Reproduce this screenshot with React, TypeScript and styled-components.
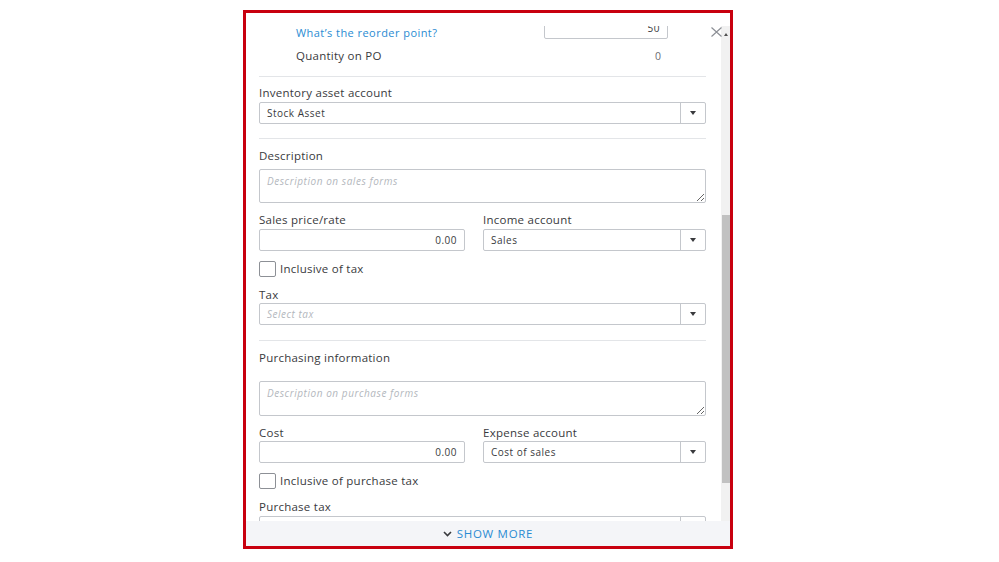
import React, { useLayoutEffect, useRef } from 'react';
import styled, { createGlobalStyle } from 'styled-components';

const GlobalStyle = createGlobalStyle`
  body {
    margin: 0;
    background: #fff;
    font-family: 'Open Sans', 'Liberation Sans', sans-serif;
  }
`;

const Page = styled.div`
  padding: 10px 0 0 243px;
`;

const Panel = styled.div`
  position: relative;
  width: 484px;
  height: 533px;
  border: 3px solid #c8000f;
  background: #fff;
  display: flex;
  flex-direction: column;
`;

const Header = styled.div`
  height: 13px;
  flex-shrink: 0;
`;

const CloseButton = styled.button`
  position: absolute;
  top: 14px;
  right: 8px;
  width: 11px;
  height: 10px;
  padding: 0;
  border: none;
  background: transparent;
  display: flex;
  cursor: pointer;
`;

const Body = styled.div`
  flex: 1;
  min-height: 0;
  display: flex;
`;

const ScrollArea = styled.div`
  flex: 1;
  overflow: hidden;
  padding: 0 15px 0 13px;
`;

const Scrollbar = styled.div`
  width: 9px;
  background: #f1f1f1;
  display: flex;
  flex-direction: column;
  align-items: center;
`;

const ArrowUp = styled.div`
  height: 16px;
  display: flex;
  align-items: center;
  justify-content: center;
  &::after {
    content: '';
    border-left: 2.5px solid transparent;
    border-right: 2.5px solid transparent;
    border-bottom: 3px solid #505050;
  }
`;

const Thumb = styled.div<{ $offset: number; $size: number }>`
  width: 8px;
  margin-top: ${p => p.$offset}px;
  height: ${p => p.$size}px;
  background: #c1c1c1;
`;

const Footer = styled.div`
  height: 25px;
  flex-shrink: 0;
  background: #f4f5f8;
  display: flex;
  align-items: center;
  justify-content: center;
  gap: 5px;
  color: #2a8bd2;
  font-size: 11.5px;
  font-weight: 500;
  letter-spacing: 0.7px;
`;

const StockRow = styled.div<{ $mt?: number }>`
  display: flex;
  align-items: flex-end;
  justify-content: space-between;
  padding: 0 38px 0 37px;
  margin-top: ${p => p.$mt ?? 0}px;
`;

const StockInfo = styled.div`
  display: flex;
  flex-direction: column;
  gap: 6px;
`;

const Link = styled.a`
  color: #2a8bd2;
  font-size: 11px;
  line-height: 12px;
  letter-spacing: 0.45px;
  text-decoration: none;
`;

const RowText = styled.span`
  color: #393a3d;
  font-size: 11.5px;
  font-weight: 500;
  line-height: 20px;
  letter-spacing: 0.25px;
`;

const RowValue = styled.span`
  width: 124px;
  padding-right: 7px;
  box-sizing: border-box;
  text-align: right;
  color: #6b6c72;
  font-size: 10.5px;
  line-height: 20px;
`;

const Divider = styled.hr<{ $mt: number }>`
  margin: ${p => p.$mt}px 0 0;
  border: none;
  border-top: 1px solid #e3e5e8;
`;

const Label = styled.div<{ $mt?: number }>`
  margin-top: ${p => p.$mt ?? 0}px;
  color: #393a3d;
  font-size: 11.5px;
  font-weight: 500;
  line-height: 14px;
  letter-spacing: 0.25px;
  white-space: nowrap;
`;

const TextInput = styled.input<{ $mt?: number; $width?: number }>`
  display: block;
  box-sizing: border-box;
  width: ${p => (p.$width ? `${p.$width}px` : '100%')};
  height: 22px;
  margin-top: ${p => p.$mt ?? 0}px;
  padding: 0 7px;
  border: 1px solid #c4c7cc;
  border-radius: 2px;
  font-family: inherit;
  font-size: 10px;
  letter-spacing: 0.5px;
  color: #393a3d;
  text-align: right;
  outline: none;
`;

const TextArea = styled.textarea<{ $mt: number; $height: number }>`
  display: block;
  box-sizing: border-box;
  width: 100%;
  height: ${p => p.$height}px;
  margin-top: ${p => p.$mt}px;
  padding: 4px 7px;
  border: 1px solid #c4c7cc;
  border-radius: 2px;
  font-family: inherit;
  font-size: 10px;
  letter-spacing: 0.55px;
  resize: vertical;
  outline: none;
  &::placeholder {
    color: #b3b7bd;
    font-style: italic;
  }
`;

const SelectBox = styled.div<{ $mt?: number }>`
  display: flex;
  height: 22px;
  margin-top: ${p => p.$mt ?? 0}px;
  border: 1px solid #c4c7cc;
  border-radius: 2px;
  box-sizing: border-box;
`;

const SelectValue = styled.div<{ $placeholder?: boolean }>`
  flex: 1;
  display: flex;
  align-items: center;
  padding-left: 7px;
  font-size: 10px;
  letter-spacing: 0.5px;
  color: ${p => (p.$placeholder ? '#b3b7bd' : '#393a3d')};
  font-style: ${p => (p.$placeholder ? 'italic' : 'normal')};
`;

const Caret = styled.div`
  width: 24px;
  border-left: 1px solid #c4c7cc;
  display: flex;
  align-items: center;
  justify-content: center;
  &::after {
    content: '';
    border-left: 3.5px solid transparent;
    border-right: 3.5px solid transparent;
    border-top: 4px solid #393a3d;
  }
`;

const TwoCol = styled.div<{ $mt: number }>`
  display: grid;
  grid-template-columns: 206px 1fr;
  column-gap: 18px;
  margin-top: ${p => p.$mt}px;
`;

const CheckRow = styled.label<{ $mt: number }>`
  display: flex;
  align-items: center;
  gap: 4px;
  margin-top: ${p => p.$mt}px;
  color: #393a3d;
  font-size: 11.5px;
  font-weight: 500;
  line-height: 16px;
  letter-spacing: 0.25px;
`;

const CheckBox = styled.input`
  appearance: none;
  margin: 0;
  width: 17px;
  height: 16px;
  border: 1px solid #8d9096;
  border-radius: 2px;
  background: #fff;
`;

const Select = ({ value, placeholder, mt }: { value?: string; placeholder?: string; mt?: number }) => (
  <SelectBox $mt={mt}>
    <SelectValue $placeholder={!value}>{value || placeholder}</SelectValue>
    <Caret />
  </SelectBox>
);

export default function App() {
  const scrollRef = useRef<HTMLDivElement>(null);

  // the form is shown scrolled down past the reorder point label
  useLayoutEffect(() => {
    if (scrollRef.current) scrollRef.current.scrollTop = 19;
  }, []);

  return (
    <Page>
      <GlobalStyle />
      <Panel>
        <Header />
        <CloseButton aria-label="Close">
          <svg width="11" height="10" viewBox="0 0 11 10">
            <path d="M0.5 0.5 L10.5 9.5 M10.5 0.5 L0.5 9.5" stroke="#8d9096" strokeWidth="1.2" fill="none" />
          </svg>
        </CloseButton>
        <Body>
          <ScrollArea ref={scrollRef}>
            <StockRow>
              <StockInfo>
                <Label>Reorder point</Label>
                <Link href="#">What’s the reorder point?</Link>
              </StockInfo>
              <TextInput $width={124} defaultValue="50" />
            </StockRow>
            <StockRow $mt={7}>
              <RowText>Quantity on PO</RowText>
              <RowValue>0</RowValue>
            </StockRow>
            <Divider $mt={10} />

            <Label $mt={9}>Inventory asset account</Label>
            <Select mt={2} value="Stock Asset" />
            <Divider $mt={14} />

            <Label $mt={10}>Description</Label>
            <TextArea $mt={6} $height={34} placeholder="Description on sales forms" />

            <TwoCol $mt={10}>
              <Label>Sales price/rate</Label>
              <Label>Income account</Label>
              <TextInput $mt={2} defaultValue="0.00" />
              <Select mt={2} value="Sales" />
            </TwoCol>
            <CheckRow $mt={10}>
              <CheckBox type="checkbox" />
              Inclusive of tax
            </CheckRow>

            <Label $mt={11}>Tax</Label>
            <Select mt={1} placeholder="Select tax" />
            <Divider $mt={15} />

            <Label $mt={10}>Purchasing information</Label>
            <TextArea $mt={16} $height={35} placeholder="Description on purchase forms" />

            <TwoCol $mt={10}>
              <Label>Cost</Label>
              <Label>Expense account</Label>
              <TextInput $mt={1} defaultValue="0.00" />
              <Select mt={1} value="Cost of sales" />
            </TwoCol>
            <CheckRow $mt={10}>
              <CheckBox type="checkbox" />
              Inclusive of purchase tax
            </CheckRow>

            <Label $mt={11}>Purchase tax</Label>
            <Select mt={2} value=" " />
          </ScrollArea>
          <Scrollbar>
            <ArrowUp />
            <Thumb $offset={173} $size={268} />
          </Scrollbar>
        </Body>
        <Footer>
          <svg width="9" height="6" viewBox="0 0 9 6">
            <path d="M1 1 L4.5 4.5 L8 1" stroke="#393a3d" strokeWidth="1.6" fill="none" />
          </svg>
          SHOW MORE
        </Footer>
      </Panel>
    </Page>
  );
}
